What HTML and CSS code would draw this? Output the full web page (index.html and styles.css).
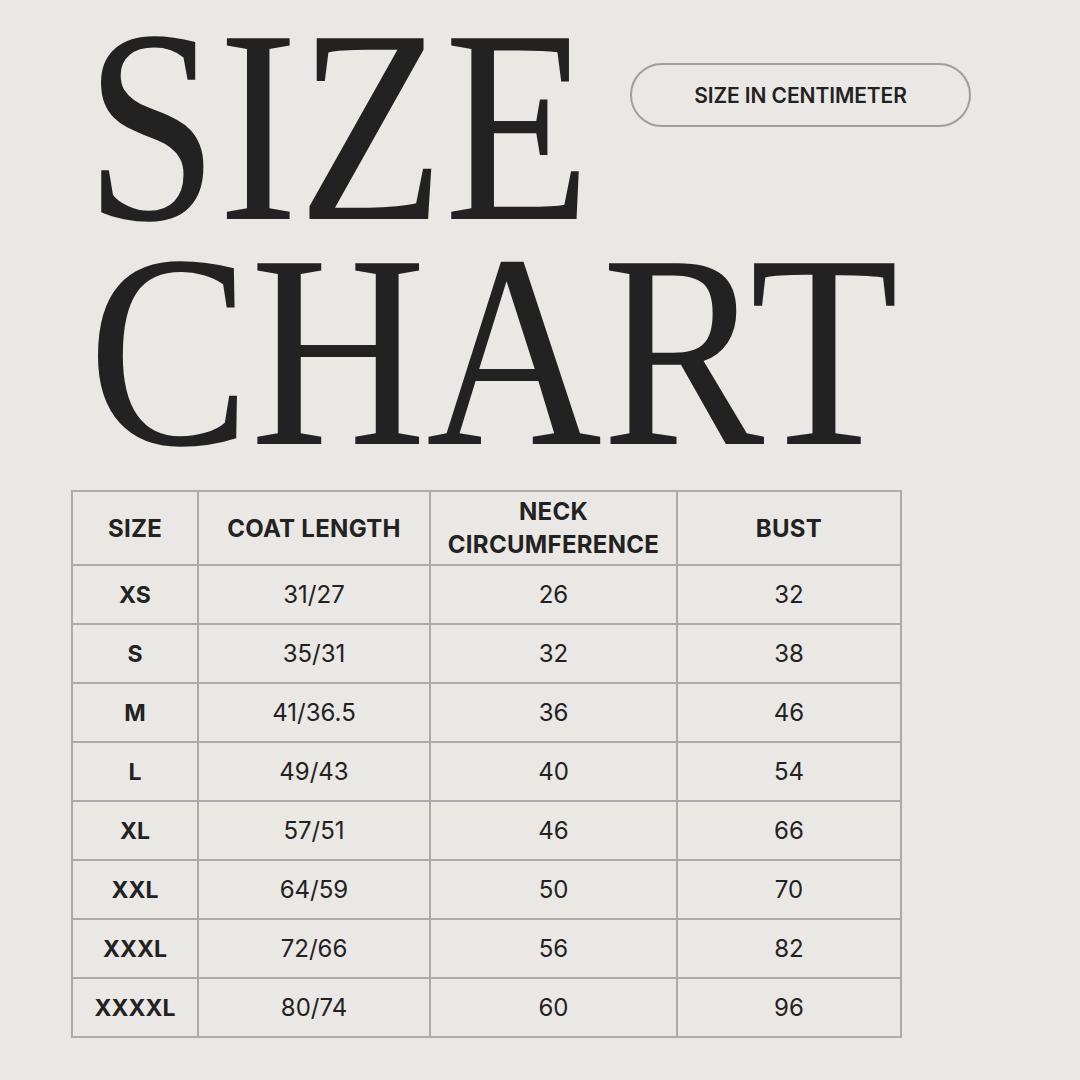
FILE: index.html
```html
<!DOCTYPE html>
<html>
<head>
<meta charset="utf-8">
<link rel="stylesheet" href="styles.css">
</head>
<body>
<div class="page">
  <header class="top">
    <h1 class="title"><span class="line l1">SIZE</span><span class="line l2">CHART</span></h1>
    <div class="pill">SIZE IN CENTIMETER</div>
  </header>
  <table class="chart">
    <thead>
      <tr><th class="c1">SIZE</th><th class="c2">COAT LENGTH</th><th class="c3">NECK<br>CIRCUMFERENCE</th><th class="c4">BUST</th></tr>
    </thead>
    <tbody>
      <tr><td class="sz">XS</td><td>31/27</td><td>26</td><td>32</td></tr>
      <tr><td class="sz">S</td><td>35/31</td><td>32</td><td>38</td></tr>
      <tr><td class="sz">M</td><td>41/36.5</td><td>36</td><td>46</td></tr>
      <tr><td class="sz">L</td><td>49/43</td><td>40</td><td>54</td></tr>
      <tr><td class="sz">XL</td><td>57/51</td><td>46</td><td>66</td></tr>
      <tr><td class="sz">XXL</td><td>64/59</td><td>50</td><td>70</td></tr>
      <tr><td class="sz">XXXL</td><td>72/66</td><td>56</td><td>82</td></tr>
      <tr><td class="sz">XXXXL</td><td>80/74</td><td>60</td><td>96</td></tr>
    </tbody>
  </table>
</div>
</body>
</html>
```
FILE: styles.css
```css
html, body {
  margin: 0;
  padding: 0;
  background: #e9e8e4;
}
.page {
  width: 1080px;
  height: 1080px;
  box-sizing: border-box;
  padding: 14px 0 0 0;
  display: flex;
  flex-direction: column;
  align-items: flex-start;
  color: #222222;
  font-family: Inter, "Liberation Sans", sans-serif;
}
.top {
  display: flex;
  align-items: flex-start;
  height: 476px;
}
.title {
  margin: 0 0 0 85px;
  font-family: "Liberation Serif", serif;
  font-weight: 400;
  font-size: 276px;
  line-height: 225px;
  color: #222222;
  width: 545px;
  flex: none;
}
.line {
  display: block;
  transform-origin: left center;
  white-space: nowrap;
}
.l1 { transform: scaleX(0.868); }
.l2 { transform: scaleX(0.882); margin-left: 3px; }
.pill {
  margin: 49px 0 0 0;
  width: 341px;
  height: 64px;
  box-sizing: border-box;
  border: 2px solid #9e9e9c;
  border-radius: 32px;
  display: flex;
  align-items: center;
  justify-content: center;
  font-size: 21px;
  font-weight: 600;
  letter-spacing: -0.1px;
}
.chart {
  margin-left: 71px;
  border-collapse: collapse;
  table-layout: fixed;
}
.chart th, .chart td {
  border: 2px solid #ababab;
  text-align: center;
  padding: 0;
  font-size: 24px;
}
.chart th {
  height: 72px;
  font-weight: 700;
  line-height: 33px;
  letter-spacing: 0.3px;
}
.chart td {
  height: 57px;
  font-weight: 400;
}
.chart td.sz { font-weight: 700; font-size: 23px; }
.c1 { width: 124px; }
.c2 { width: 230px; }
.c3 { width: 245px; }
.c4 { width: 222px; }
```
